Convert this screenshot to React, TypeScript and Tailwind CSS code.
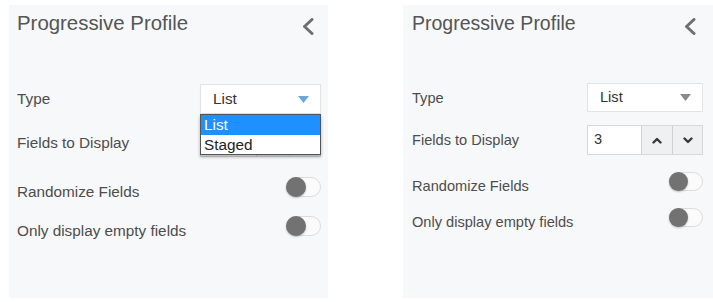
import React from "react";

const font = { fontFamily: '"Liberation Sans", Arial, sans-serif' };

function Chevron({ cls }: { cls: string }) {
  return (
    <svg className={cls} width="12" height="17" viewBox="0 0 12 17" fill="none">
      <polyline points="10,1.5 2.5,8.5 10,15.5" stroke="#6f6f6f" strokeWidth="3" strokeLinecap="round" strokeLinejoin="round" />
    </svg>
  );
}

function Toggle({ cls }: { cls: string }) {
  return (
    <div className={`relative rounded-full border border-[#dcdcdc] bg-[#fbfbfb] ${cls}`}>
      <div className="absolute left-[-1px] top-[-1px] bottom-[-1px] aspect-square rounded-full bg-[#727272] shadow-[0_1px_2px_rgba(0,0,0,0.25)]" />
    </div>
  );
}

function Tri({ color }: { color: string }) {
  return (
    <svg width="11" height="7" viewBox="0 0 11 7">
      <polygon points="0,0 11,0 5.5,7" fill={color} />
    </svg>
  );
}

function StepUp() {
  return (
    <svg width="10" height="7" viewBox="0 0 10 7" fill="none">
      <polyline points="1.5,5.5 5,2 8.5,5.5" stroke="#3a3a3a" strokeWidth="2.4" strokeLinecap="round" strokeLinejoin="round" />
    </svg>
  );
}
function StepDown() {
  return (
    <svg width="10" height="7" viewBox="0 0 10 7" fill="none">
      <polyline points="1.5,1.5 5,5 8.5,1.5" stroke="#3a3a3a" strokeWidth="2.4" strokeLinecap="round" strokeLinejoin="round" />
    </svg>
  );
}

export default function App() {
  return (
    <div className="flex w-[713px] h-[302px] bg-white pl-[9px] pt-[5px] gap-[75px] text-[#4d4d4d]" style={font}>
      {/* Left panel */}
      <div className="w-[319px] h-[293px] bg-[#f7f8fa] pl-[8px] pr-[7px] pt-[6px] flex flex-col">
        <div className="flex justify-between items-start">
          <div className="text-[20.4px] leading-[24px] text-[#555]">Progressive Profile</div>
          <Chevron cls="mt-[7px] mr-[7px]" />
        </div>
        <div className="mt-[49px] h-[30px] flex items-center justify-between">
          <span className="text-[15.3px] leading-[18px]">Type</span>
          <div className="relative w-[121px] h-[30px] bg-white border border-[#e3e3e3] shadow-[0_1px_1px_rgba(0,0,0,0.06)] flex items-center justify-between pl-[12px] pr-[11px]">
            <span className="text-[15.3px] text-[#333]">List</span>
            <Tri color="#6aa8dc" />
            <div className="absolute left-[-1px] right-[-1px] top-[29px] z-10 bg-white border border-[#555] shadow-[0_2px_3px_rgba(0,0,0,0.3)] text-[15.3px] leading-[19px]">
              <div className="bg-[#1e90ff] text-white pl-[3px] h-[20px]">List</div>
              <div className="text-[#222] pl-[3px] h-[19px]">Staged</div>
            </div>
          </div>
        </div>
        <div className="mt-[12px] h-[30px] flex items-center justify-between">
          <span className="pt-[3px] text-[15.3px] leading-[18px]">Fields to Display</span>
          <div className="w-[121px] h-[32px] flex border border-[#d8d8d8] bg-white">
            <div className="w-[55px] h-full" />
            <div className="w-[33px] h-full border-l border-[#d0d0d0] bg-[#eef0f2]" />
            <div className="flex-1 h-full border-l border-[#d0d0d0] bg-[#eef0f2]" />
          </div>
        </div>
        <div className="mt-[21px] flex justify-between items-start">
          <span className="mt-[6px] text-[15.3px] leading-[18px]">Randomize Fields</span>
          <Toggle cls="w-[35px] h-[20px]" />
        </div>
        <div className="mt-[15px] flex justify-between items-start">
          <span className="mt-[6px] text-[15.3px] leading-[18px]">Only display empty fields</span>
          <Toggle cls="w-[35px] h-[20px]" />
        </div>
      </div>

      {/* Right panel */}
      <div className="w-[310px] h-[293px] bg-[#f7f8fa] pl-[9px] pr-[10px] pt-[6px] flex flex-col">
        <div className="flex justify-between items-start">
          <div className="text-[19.5px] leading-[24px] text-[#555]">Progressive Profile</div>
          <Chevron cls="mt-[7px] mr-[7px]" />
        </div>
        <div className="mt-[48px] h-[29px] flex items-center justify-between">
          <span className="text-[14.6px] leading-[18px]">Type</span>
          <div className="w-[116px] h-[29px] bg-white border border-[#e3e3e3] flex items-center justify-between pl-[12px] pr-[11px]">
            <span className="text-[14.6px] text-[#333]">List</span>
            <Tri color="#8a8a8a" />
          </div>
        </div>
        <div className="mt-[13px] h-[30px] flex items-center justify-between">
          <span className="text-[14.6px] leading-[18px]">Fields to Display</span>
          <div className="w-[116px] h-[30px] flex border border-[#d8d8d8] bg-white">
            <div className="w-[53px] h-full flex items-center pl-[6px] text-[14.6px] text-[#333]">3</div>
            <div className="w-[31px] h-full border-l border-[#d0d0d0] bg-[#eef0f2] flex items-center justify-center">
              <StepUp />
            </div>
            <div className="flex-1 h-full border-l border-[#d0d0d0] bg-[#eef0f2] flex items-center justify-center">
              <StepDown />
            </div>
          </div>
        </div>
        <div className="mt-[17px] flex justify-between items-start">
          <span className="mt-[5px] text-[14.6px] leading-[18px]">Randomize Fields</span>
          <Toggle cls="w-[34px] h-[19px]" />
        </div>
        <div className="mt-[13px] flex justify-between items-start">
          <span className="mt-[5px] text-[14.6px] leading-[18px]">Only display empty fields</span>
          <Toggle cls="w-[34px] h-[19px]" />
        </div>
      </div>
    </div>
  );
}
